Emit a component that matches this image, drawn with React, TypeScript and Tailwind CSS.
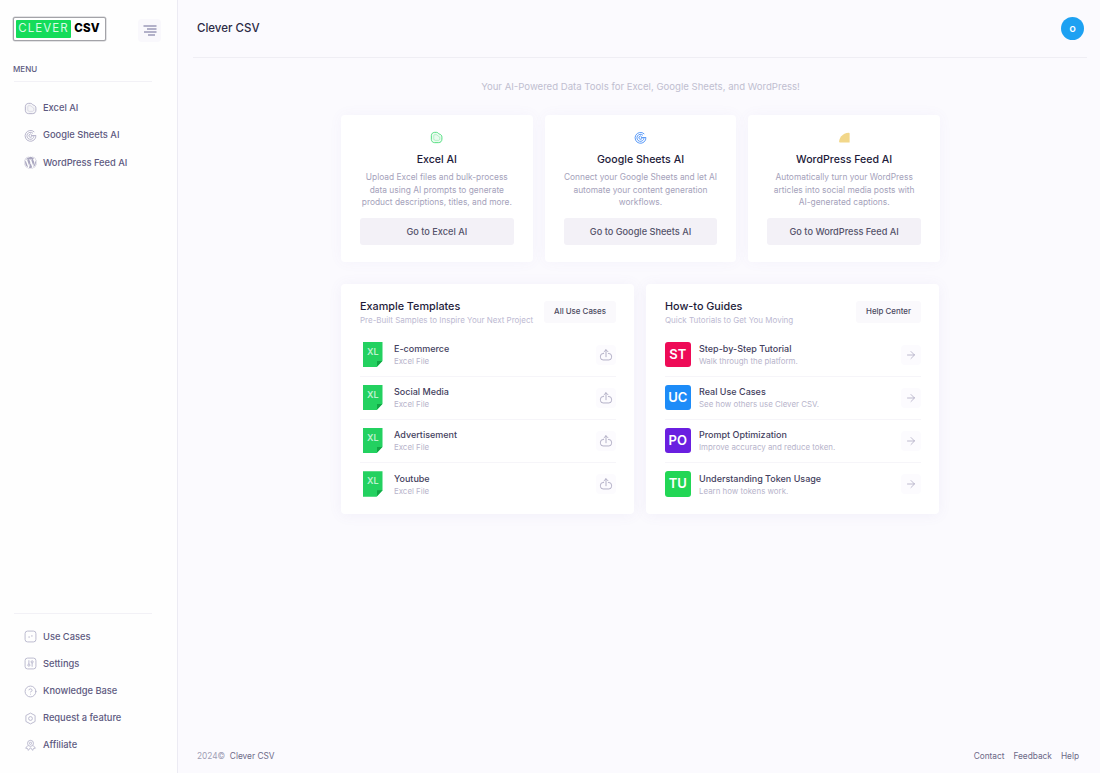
import { ArrowRight, CircleHelp } from 'lucide-react';
import { FaWordpress } from 'react-icons/fa';
import type { ReactNode } from 'react';

function ExcelIcon({ className }: { className: string }) {
  return (
    <svg viewBox="0 0 24 24" fill="none" stroke="currentColor" strokeWidth="1.800" className={className}>
      <path d="M2.500 8.500c0-3.500 2.500-6 6-6h3.500c1.700 0 2.800.8 3.700 2 .5.700 1.200 1.100 2.100 1.300 2.500.6 4.200 2.700 4.200 5.700v3.500c0 4-2.500 6.500-6.500 6.500H8.500c-3.500 0-6-2.500-6-6z" fill="currentColor" fillOpacity="0.12" />
      <path d="M7 8.500c0-1 .7-1.700 1.700-1.700h2.500c1 0 1.700.5 2.300 1.300.7 1 1.700 1.600 2.800 1.900 1 .3 1.700 1 1.700 2.200v2.300c0 1.800-1 2.800-2.800 2.800H9.500C8 17.300 7 16.300 7 14.800z" strokeWidth="1.200" opacity="0.55" />
    </svg>
  );
}

function GoogleIcon({ className }: { className: string }) {
  return (
    <svg viewBox="0 0 24 24" fill="none" stroke="currentColor" strokeWidth="1.700" className={className}>
      <path d="M19 5.500A10 10 0 1 0 22 12h-9" />
      <path d="M16.500 8A6.500 6.500 0 1 0 18.400 13" />
      <path d="M14 10a3 3 0 1 0 1 3" />
    </svg>
  );
}

function UseCasesIcon() {
  return (
    <svg viewBox="0 0 24 24" fill="none" stroke="currentColor" strokeWidth="1.600" className="h-[13px] w-[13px]">
      <rect x="2" y="2" width="20" height="20" rx="4.500" />
      <path d="M8 13h3M13 11h3" />
    </svg>
  );
}

function SettingsIcon() {
  return (
    <svg viewBox="0 0 24 24" fill="none" stroke="currentColor" strokeWidth="1.600" className="h-[13px] w-[13px]">
      <rect x="2" y="2" width="20" height="20" rx="4.500" />
      <circle cx="9" cy="15" r="2" />
      <circle cx="15" cy="9" r="2" />
      <path d="M9 6v7M15 11v7" />
    </svg>
  );
}

function FeatureIcon() {
  return (
    <svg viewBox="0 0 24 24" fill="none" stroke="currentColor" strokeWidth="1.600" className="h-[13px] w-[13px]">
      <path d="M12 2l8.500 4.500v11L12 22l-8.500-4.500v-11z" strokeLinejoin="round" />
      <circle cx="12" cy="12" r="3.500" />
    </svg>
  );
}

function AffiliateIcon() {
  return (
    <svg viewBox="0 0 24 24" fill="none" stroke="currentColor" strokeWidth="1.600" className="h-[13px] w-[13px]">
      <circle cx="12" cy="8" r="5.500" />
      <circle cx="12" cy="8" r="2" />
      <path d="M7 12l-4 5 3.500.5L8 21l4-5 4 5 1.500-3.500L21 17l-4-5" strokeLinejoin="round" />
    </svg>
  );
}

function ShareIcon() {
  return (
    <svg viewBox="0 0 24 24" fill="none" stroke="currentColor" strokeWidth="1.500" strokeLinecap="round" strokeLinejoin="round" className="h-[14px] w-[14px]">
      <path d="M8 9.500H7a4.500 4.500 0 0 0-4.500 4.500v2A4.500 4.500 0 0 0 7 20.500h10a4.500 4.500 0 0 0 4.500-4.500v-2A4.500 4.500 0 0 0 17 9.500h-1" />
      <path d="M12 15V3M8.500 6.500 12 3l3.500 3.500" />
    </svg>
  );
}

function SideLink({ icon, label }: { icon: ReactNode; label: string }) {
  return (
    <div className="flex h-[27.200px] items-center gap-[6px] pl-[24px] text-[#b3b1c8]">
      <span className="flex w-[13px] justify-center">{icon}</span>
      <span className="text-[9.300px] font-medium text-[#5d597f]">{label}</span>
    </div>
  );
}

function ToolCard({ icon, title, text, action }: { icon: ReactNode; title: string; text: string[]; action: string }) {
  return (
    <div className="flex h-[147px] flex-col items-center rounded-[4px] bg-white px-[19px] pt-[16px] shadow-[0_0_14px_rgba(120,100,190,0.05)]">
      {icon}
      <h3 className="mt-[9px] text-[10.600px] leading-[14px] font-medium text-[#1e1b3a]">{title}</h3>
      <p className="mt-[4px] text-center text-[8.400px] leading-[12.500px] text-[#a5a2bb]">
        {text.map((line) => (
          <span key={line} className="block whitespace-nowrap">{line}</span>
        ))}
      </p>
      <button className="mt-[9px] h-[27px] w-full rounded-[3px] bg-[#f3f1f7] pt-[1px] text-[9.200px] font-medium text-[#55536a]">
        {action}
      </button>
    </div>
  );
}

function PanelRow({ badge, title, sub, action, last }: { badge: ReactNode; title: string; sub: string; action: ReactNode; last?: boolean }) {
  return (
    <div className={`flex h-[43px] items-center ${last ? '' : 'border-b border-[#f6f5f9]'}`}>
      <span className="flex w-[34px] shrink-0">{badge}</span>
      <div className="min-w-0 flex-1">
        <p className="text-[9px] leading-[13px] font-medium text-[#44415e]">{title}</p>
        <p className="text-[7.900px] leading-[12px] text-[#b7b4cb]">{sub}</p>
      </div>
      <span className="flex h-[20px] w-[20px] items-center justify-center rounded-[4px] bg-[#fcfbfe] text-[#a9a6bf]">{action}</span>
    </div>
  );
}

function FileBadge() {
  return (
    <span className="relative ml-[3px] flex h-[25.500px] w-[19.500px] items-start justify-center bg-[#23d160] pt-[5px] text-[9px] leading-[10px] font-semibold text-[#bdf2d0] [clip-path:polygon(0_0,100%_0,100%_75%,70%_100%,0_100%)]">
      XL
      <span className="absolute right-0 bottom-0 h-[6.500px] w-[6px] bg-[#12a544] [clip-path:polygon(100%_0,0_0,0_100%)]" />
    </span>
  );
}

function LetterBadge({ text, color }: { text: string; color: string }) {
  return (
    <span className={`flex h-[25.500px] w-[25.500px] items-center justify-center rounded-[3px] text-[13px] font-semibold text-white ${color}`}>
      {text}
    </span>
  );
}

function Panel({ title, sub, button, children }: { title: string; sub: string; button: string; children: ReactNode }) {
  return (
    <section className="h-[230px] rounded-[4px] bg-white pt-[14px] pr-[18px] pl-[19px] shadow-[0_1px_14px_rgba(120,100,190,0.07)]">
      <div className="mb-[7.500px] flex h-[28px] items-center justify-between">
        <div className="whitespace-nowrap">
          <h3 className="pt-[0.500px] text-[10.800px] leading-[16px] font-medium text-[#1e1b3a]">{title}</h3>
          <p className="mt-[0.500px] text-[8px] leading-[11px] text-[#bcb9d2]">{sub}</p>
        </div>
        <button className="h-[22px] rounded-[3px] bg-[#faf9fc] px-[10px] text-[7.900px] font-medium whitespace-nowrap text-[#4b4960]">{button}</button>
      </div>
      {children}
    </section>
  );
}

const templates = ['E-commerce', 'Social Media', 'Advertisement', 'Youtube'];

const guides = [
  { badge: 'ST', color: 'bg-[#ee0b57]', title: 'Step-by-Step Tutorial', sub: 'Walk through the platform.' },
  { badge: 'UC', color: 'bg-[#1d8cf8]', title: 'Real Use Cases', sub: 'See how others use Clever CSV.' },
  { badge: 'PO', color: 'bg-[#6a1fe0]', title: 'Prompt Optimization', sub: 'Improve accuracy and reduce token.' },
  { badge: 'TU', color: 'bg-[#22d655]', title: 'Understanding Token Usage', sub: 'Learn how tokens work.' },
];

export default function App() {
  return (
    <div className="flex h-[773px] w-[1100px] overflow-hidden bg-[#fbfafe] font-['Inter',sans-serif]">
      <aside className="flex w-[178px] shrink-0 flex-col border-r border-[#ecebf3] bg-[#fefefe] pb-[14px]">
        <div className="flex h-[60px] items-center justify-between pr-[16px] pl-[13px]">
          <div className="-mt-[2px] flex h-[24px] w-[93px] items-center rounded-[2px] border border-[#a3a3a8] bg-white p-[2px] shadow-[0_0_0_0.5px_#c8c8cc]">
            <span className="flex h-full w-[55px] items-center justify-center rounded-[1px] bg-[#14dc5a] text-[11.500px] leading-none tracking-[0.09em] text-[#d9fae5]">CLEVER</span>
            <span className="flex-1 text-center text-[11.500px] leading-none font-extrabold tracking-[0.02em] text-black">CSV</span>
          </div>
          <span className="flex h-[23px] w-[23px] items-center justify-center rounded-[4px] bg-[#f9f8fc]">
            <svg viewBox="0 0 14 11" fill="none" stroke="#6d6a96" strokeWidth="1" className="h-[11px] w-[14px]">
              <path d="M0.500 1h13M4 4h9.500M1 7h12.500M5 10h7" />
            </svg>
          </span>
        </div>
        <p className="mt-[4px] pl-[13px] text-[8px] leading-[10px] font-medium text-[#5d5a80]">MENU</p>
        <div className="mt-[7px] mr-[25px] mb-[12.500px] ml-[14px] border-t border-[#f2f1f6]" />
        <SideLink icon={<ExcelIcon className="h-[13px] w-[13px]" />} label="Excel AI" />
        <SideLink icon={<GoogleIcon className="h-[13px] w-[13px]" />} label="Google Sheets AI" />
        <SideLink icon={<FaWordpress className="h-[13px] w-[13px] text-[#a9a6bf]" />} label="WordPress Feed AI" />
        <div className="mt-auto mr-[25px] mb-[9px] ml-[14px] border-t border-[#f2f1f6]" />
        <SideLink icon={<UseCasesIcon />} label="Use Cases" />
        <SideLink icon={<SettingsIcon />} label="Settings" />
        <SideLink icon={<CircleHelp className="h-[13px] w-[13px]" strokeWidth={1.600} />} label="Knowledge Base" />
        <SideLink icon={<FeatureIcon />} label="Request a feature" />
        <SideLink icon={<AffiliateIcon />} label="Affiliate" />
      </aside>

      <main className="flex min-w-0 flex-1 flex-col">
        <header className="mr-[13px] ml-[15px] flex h-[58px] shrink-0 items-center justify-between border-b border-[#efeef4] pr-[3px] pl-[4px]">
          <h1 className="mt-[1px] text-[11.500px] font-medium text-[#2c2a45]">Clever CSV</h1>
          <span className="flex h-[23px] w-[23px] items-center justify-center rounded-full bg-[#1da1f2] text-[8px] font-bold text-white">O</span>
        </header>

        <div className="flex flex-1 flex-col items-center pl-[3px]">
          <p className="mt-[22px] text-[9.600px] leading-[13px] text-[#c0bed0]">Your AI-Powered Data Tools for Excel, Google Sheets, and WordPress!</p>
          <div className="mt-[22px] grid w-[599px] grid-cols-3 gap-[12px]">
            <ToolCard
              icon={<ExcelIcon className="h-[13px] w-[13px] text-[#52de7f]" />}
              title="Excel AI"
              text={['Upload Excel files and bulk-process', 'data using AI prompts to generate', 'product descriptions, titles, and more.']}
              action="Go to Excel AI"
            />
            <ToolCard
              icon={<GoogleIcon className="h-[13px] w-[13px] text-[#4f93f7]" />}
              title="Google Sheets AI"
              text={['Connect your Google Sheets and let AI', 'automate your content generation', 'workflows.']}
              action="Go to Google Sheets AI"
            />
            <ToolCard
              icon={
                <svg viewBox="0 0 24 24" className="h-[13px] w-[13px]" fill="#f2d78a">
                  <path d="M20 3c1 0 1.500.5 1.500 1.500V21H3c-.5 0-1-.5-1-1 0-3 1-7 4-10.500S14 3 20 3z" />
                </svg>
              }
              title="WordPress Feed AI"
              text={['Automatically turn your WordPress', 'articles into social media posts with', 'AI-generated captions.']}
              action="Go to WordPress Feed AI"
            />
          </div>

          <div className="mt-[22px] grid w-[599px] grid-cols-[293px_293px] gap-[12px]">
            <Panel title="Example Templates" sub="Pre-Built Samples to Inspire Your Next Project" button="All Use Cases">
              {templates.map((name, i) => (
                <PanelRow
                  key={name}
                  badge={<FileBadge />}
                  title={name}
                  sub="Excel File"
                  action={<ShareIcon />}
                  last={i === templates.length - 1}
                />
              ))}
            </Panel>
            <Panel title="How-to Guides" sub="Quick Tutorials to Get You Moving" button="Help Center">
              {guides.map((g, i) => (
                <PanelRow
                  key={g.badge}
                  badge={<LetterBadge text={g.badge} color={g.color} />}
                  title={g.title}
                  sub={g.sub}
                  action={<ArrowRight className="h-[12px] w-[12px]" strokeWidth={1.500} />}
                  last={i === guides.length - 1}
                />
              ))}
            </Panel>
          </div>
        </div>

        <footer className="flex h-[32px] shrink-0 items-start justify-between pr-[21px] pl-[19px] text-[8.300px] text-[#6b6987]">
          <p className="mt-[9px]"><span className="text-[#a09eb5]">2024©</span> &nbsp;Clever CSV</p>
          <div className="mt-[9px] flex gap-[9px]">
            <span>Contact</span>
            <span>Feedback</span>
            <span>Help</span>
          </div>
        </footer>
      </main>
    </div>
  );
}
